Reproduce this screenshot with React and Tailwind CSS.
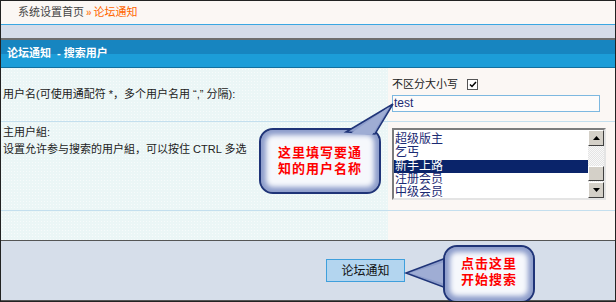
const font = "font-['Liberation_Sans','Noto_Sans_CJK_SC',sans-serif]";

function Callout({ className, children }) {
  return (
    <div
      className={`absolute rounded-[14px] border-2 border-[#1f3478] bg-[#f6f8fc] shadow-[inset_0_0_5px_5px_#8d9dcb] flex flex-col items-center justify-center text-[13px] font-bold leading-[16px] tracking-[1px] text-[#ff0000] ${className}`}
    >
      {children}
    </div>
  );
}

function ListBox() {
  const items = ['超级版主', '乞丐', '新手上路', '注册会员', '中级会员'];
  return (
    <div className="w-[214px] h-[72px] border-2 border-t-[#7c7c7c] border-l-[#7c7c7c] border-b-[#e4e4e4] border-r-[#e4e4e4] bg-white flex">
      <div className="flex-1 pt-[3px]">
        {items.map((it, i) => (
          <div
            key={it}
            className={`h-[13.3px] leading-[13.3px] pl-[1px] text-[12px] ${
              i === 2 ? 'bg-[#0a246a] text-white' : 'text-[#1b2a73]'
            }`}
          >
            {it}
          </div>
        ))}
      </div>
      <div className="w-[16px] flex flex-col bg-[repeating-conic-gradient(#e4e4e4_0_25%,#f8f8f8_0_50%)] bg-[length:2px_2px]">
        <div className="h-[16px] bg-[#d4d0c8] border border-t-white border-l-white border-b-[#404040] border-r-[#404040] flex items-center justify-center">
          <svg width="7" height="4" viewBox="0 0 7 4"><polygon points="3.5,0 7,4 0,4" fill="#000" /></svg>
        </div>
        <div className="h-[20px]" />
        <div className="h-[15px] bg-[#d4d0c8] border border-t-white border-l-white border-b-[#404040] border-r-[#404040]" />
        <div className="flex-1" />
        <div className="h-[16px] bg-[#d4d0c8] border border-t-white border-l-white border-b-[#404040] border-r-[#404040] flex items-center justify-center">
          <svg width="7" height="4" viewBox="0 0 7 4"><polygon points="0,0 7,0 3.5,4" fill="#000" /></svg>
        </div>
      </div>
    </div>
  );
}

export default function App() {
  const dots = 'bg-[#ebf6f6] bg-[radial-gradient(#f7fbfb_0.6px,transparent_0.7px)] bg-[length:3px_3px]';
  return (
    <div className={`relative w-[616px] h-[302px] overflow-hidden border border-[#222] bg-[#fbf7f4] flex flex-col ${font}`}>
      {/* breadcrumb */}
      <div className="h-[23px] flex items-center pl-[17px] text-[11px] text-[#444]">
        系统设置首页
        <span className="text-[#ff8a3c] mx-[2px] text-[10px] font-bold">»</span>
        <span className="text-[#ff6600]">论坛通知</span>
      </div>
      <div className="h-[1px] bg-[#3aa7e2]" />
      <div className="h-[13px] bg-[#d5dce9]" />
      <div className="h-[2px] bg-[#6e6e6e]" />
      <div className="h-[28px] bg-[linear-gradient(#1785c0_0,#1785c0_50%,#1c9dd8_50%,#1c9dd8_100%)] flex items-center pl-[6px] text-[11px] font-bold text-white border-b border-[#12709f]">
        论坛通知&nbsp;&nbsp;- 搜索用户
      </div>

      {/* form rows */}
      <div className="grid grid-cols-[387px_1fr] text-[11px] text-[#222]">
        <div className={`${dots} h-[54px] flex items-center pl-[2px] border-b border-[#c4dfee]`}>
          用户名(可使用通配符 *，多个用户名用 “,” 分隔):
        </div>
        <div className="h-[54px] pl-[4px] pt-[9px] border-b border-[#c4dfee]">
          <div className="flex items-center h-[14px]">
            不区分大小写
            <span className="ml-[9px] w-[11px] h-[11px] border border-[#555] bg-white flex items-center justify-center">
              <svg width="8" height="7" viewBox="0 0 8 7"><path d="M1 3.5 L3 5.5 L7 1" stroke="#000" strokeWidth="1.5" fill="none" /></svg>
            </span>
          </div>
          <div className="mt-[4px] w-[208px] h-[17px] border border-[#7db8e0] bg-[#fdfbfa] text-[12px] leading-[15px] pl-[1px] text-[#1b2a73]">
            test
          </div>
        </div>

        <div className={`${dots} h-[89px] pl-[2px] pt-[2px] leading-[17px] border-b border-[#c4dfee]`}>
          <div>主用户組:</div>
          <div>设置允许参与搜索的用户組，可以按住 CTRL 多选</div>
        </div>
        <div className="h-[89px] pl-[4px] pt-[6px] border-b border-[#c4dfee]">
          <ListBox />
        </div>

        <div className={`${dots} h-[29px]`} />
        <div className="h-[29px]" />
      </div>

      <div className="h-[1px] bg-[#555]" />
      <div className="flex-1 bg-[#d6deea] flex items-center pl-[325px]">
        <div className="w-[79px] h-[23px] border border-[#3f9fdc] bg-[#b3d5ef] flex items-center justify-center text-[12px] text-[#111]">
          论坛通知
        </div>
      </div>
      <div className="h-[1px] bg-[#555]" />

      {/* callout 1 */}
      <Callout className="left-[258px] top-[127px] w-[122px] h-[66px]">
        <div>这里填写要通</div>
        <div>知的用户名称</div>
      </Callout>
      <svg className="absolute left-0 top-0 pointer-events-none" width="616" height="302">
        <polygon points="345,131 392,103 374,133" fill="#8d9dcb" stroke="#1f3478" strokeWidth="1.5" />
        <polygon points="349,133 388,106 371,134" fill="#9fadd4" />
        <polygon points="445,257 405,272 445,287" fill="#8d9dcb" stroke="#1f3478" strokeWidth="1.5" />
        <polygon points="447,260 409,272 447,284" fill="#9fadd4" />
      </svg>

      {/* callout 2 */}
      <Callout className="left-[442px] top-[244px] w-[92px] h-[58px] pb-[4px]">
        <div>点击这里</div>
        <div>开始搜索</div>
      </Callout>
    </div>
  );
}
